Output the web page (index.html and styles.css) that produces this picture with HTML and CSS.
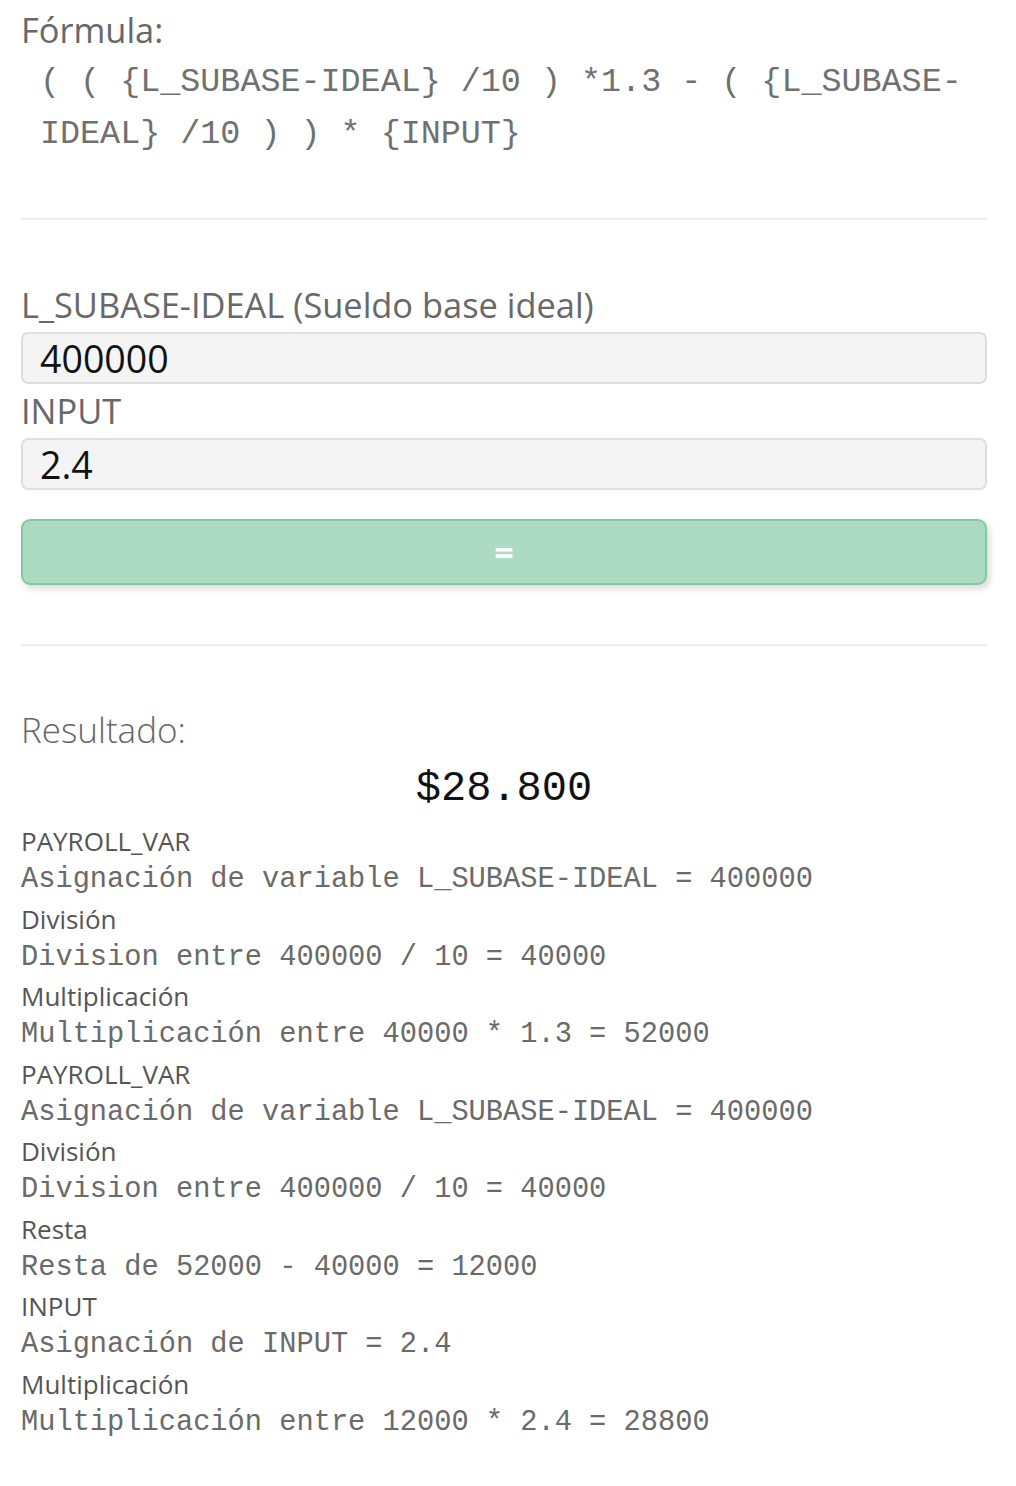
FILE: index.html
```html
<!DOCTYPE html>
<html lang="es">
<head>
<meta charset="utf-8">
<title>Fórmula</title>
<link rel="stylesheet" href="styles.css">
</head>
<body>
<main class="page">
  <section class="formula">
    <h2 class="section-title">Fórmula:</h2>
    <p class="formula-code">( ( {L_SUBASE-IDEAL} /10 ) *1.3 - ( {L_SUBASE-IDEAL} /10 ) ) * {INPUT}</p>
  </section>

  <hr class="divider divider-top">

  <form class="calc">
    <label class="field-label" for="f1">L_SUBASE-IDEAL (Sueldo base ideal)</label>
    <input class="field-input" id="f1" type="text" value="400000">
    <label class="field-label field-label-2" for="f2">INPUT</label>
    <input class="field-input" id="f2" type="text" value="2.4">
    <button class="calc-btn" type="button">=</button>
  </form>

  <hr class="divider divider-bottom">

  <section class="result">
    <h2 class="result-title">Resultado:</h2>
    <div class="result-value">$28.800</div>
    <ul class="steps">
      <li class="step"><div class="step-label">PAYROLL_VAR</div><div class="step-code">Asignación de variable L_SUBASE-IDEAL = 400000</div></li>
      <li class="step"><div class="step-label">División</div><div class="step-code">Division entre 400000 / 10 = 40000</div></li>
      <li class="step"><div class="step-label">Multiplicación</div><div class="step-code">Multiplicación entre 40000 * 1.3 = 52000</div></li>
      <li class="step"><div class="step-label">PAYROLL_VAR</div><div class="step-code">Asignación de variable L_SUBASE-IDEAL = 400000</div></li>
      <li class="step"><div class="step-label">División</div><div class="step-code">Division entre 400000 / 10 = 40000</div></li>
      <li class="step"><div class="step-label">Resta</div><div class="step-code">Resta de 52000 - 40000 = 12000</div></li>
      <li class="step"><div class="step-label">INPUT</div><div class="step-code">Asignación de INPUT = 2.4</div></li>
      <li class="step"><div class="step-label">Multiplicación</div><div class="step-code">Multiplicación entre 12000 * 2.4 = 28800</div></li>
    </ul>
  </section>
</main>
</body>
</html>
```

FILE: styles.css
```css
* { box-sizing: border-box; }

html, body {
  margin: 0;
  padding: 0;
  background: #ffffff;
}

body {
  font-family: "Open Sans", "Noto Sans", sans-serif;
  color: #666666;
}

.page {
  padding: 7px 29px 40px 21px;
}

.section-title {
  margin: 0;
  font-size: 34.4px;
  line-height: 45px;
  font-weight: 500;
  color: #686868;
}

.formula-code {
  margin: 4px 0 0 0;
  padding-left: 19px;
  font-family: "Liberation Mono", "Courier New", monospace;
  font-size: 33.4px;
  line-height: 52px;
  color: #707070;
}

.divider {
  border: 0;
  height: 2px;
  background: #eeeeee;
  margin: 0;
}

.divider-top { margin-top: 58px; }

.calc {
  display: flex;
  flex-direction: column;
  margin-top: 62px;
}

.field-label {
  font-size: 34.4px;
  line-height: 45px;
  font-weight: 500;
  color: #686868;
}

.field-label-2 { margin-top: 4px; }

.field-input {
  margin-top: 5px;
  height: 52px;
  border: 2px solid #dedede;
  border-radius: 7px;
  background: #f4f4f4;
  padding: 0 17px;
  font-family: "Open Sans", "Noto Sans", sans-serif;
  font-size: 37.5px;
  color: #111111;
  outline: none;
}

.calc-btn {
  margin-top: 29px;
  height: 66px;
  border: 2px solid #80c9a2;
  border-radius: 9px;
  background: #acdac3;
  color: #ffffff;
  font-family: "Open Sans", sans-serif;
  font-weight: 700;
  font-size: 34px;
  line-height: 1;
  box-shadow: 3px 4px 6px rgba(0, 0, 0, 0.14);
}

.divider-bottom { margin-top: 59px; }

.result { margin-top: 61px; }

.result-title {
  margin: 0;
  font-size: 35px;
  line-height: 45px;
  font-weight: 300;
  color: #666666;
}

.result-value {
  margin-top: 9px;
  text-align: center;
  font-family: "Liberation Mono", "Courier New", monospace;
  font-size: 42px;
  line-height: 56px;
  color: #111111;
}

.steps {
  list-style: none;
  margin: 7px 0 0 0;
  padding: 0;
}

.step-label {
  font-size: 26px;
  line-height: 34px;
  color: #555555;
}

.step-code {
  font-family: "Liberation Mono", "Courier New", monospace;
  font-size: 28.7px;
  line-height: 43.5px;
  color: #6a6a6a;
}
```
